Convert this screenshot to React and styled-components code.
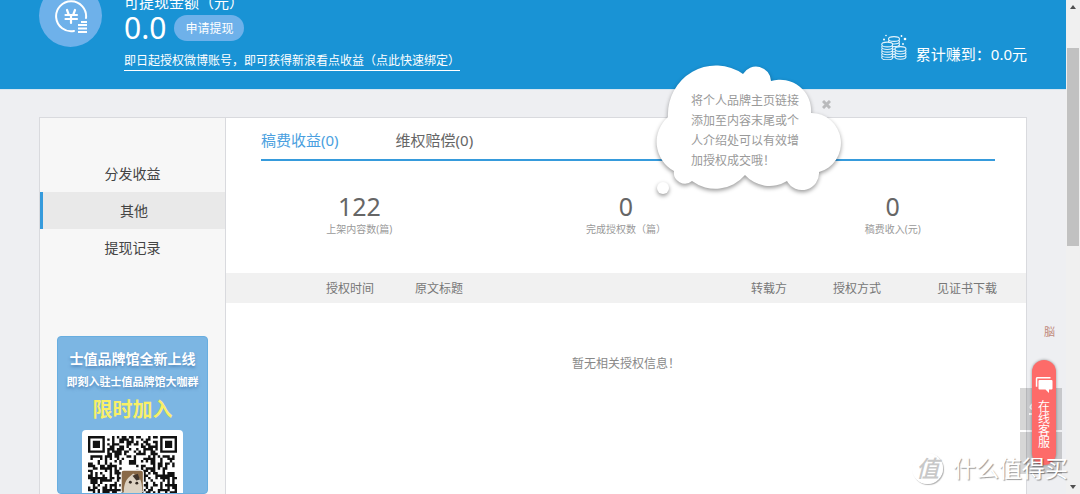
import React from "react";
import styled, { createGlobalStyle, css } from "styled-components";

const GlobalStyle = createGlobalStyle`
  * { box-sizing: border-box; }
  body {
    margin: 0;
    background: #eeeff2;
    color: #666;
    font-family: "Noto Sans", "Noto Sans CJK SC", sans-serif;
    font-size: 12px;
  }
  button { font: inherit; border: 0; padding: 0; background: none; cursor: pointer; }
  a { color: inherit; text-decoration: none; }
`;

const Screen = styled.div`
  position: relative;
  display: flex;
  height: 100vh;
  overflow: hidden;
`;

const Page = styled.div`
  flex: 1;
  min-width: 0;
  display: flex;
  flex-direction: column;
`;

/* Header */
const Header = styled.header`
  display: flex;
  align-items: flex-end;
  gap: 22px;
  height: 89px;
  flex: none;
  padding: 0 39px 18px;
  overflow: hidden;
  background: #1993d5;
  color: #fff;
`;

const CoinBadge = styled.div`
  display: grid;
  place-items: center;
  width: 63px;
  height: 63px;
  flex: none;
  margin-bottom: 24px;
  border-radius: 50%;
  background: #6eb1ea;
`;

const Balance = styled.div`
  flex: 1;
  display: flex;
  flex-direction: column;
  align-items: flex-start;
`;

const BalanceLabel = styled.span`
  font-size: 15px;
  line-height: 20px;
`;

const AmountRow = styled.div`
  display: flex;
  align-items: center;
  gap: 8px;
  margin-bottom: 8px;
`;

const Amount = styled.span`
  font-size: 30px;
  line-height: 32px;
`;

const WithdrawButton = styled.button`
  height: 26px;
  padding: 0 11px;
  border-radius: 13px;
  background: #6eb1ea;
  color: #fff;
`;

const BindLink = styled.a`
  line-height: 18px;
  border-bottom: 1px solid #fff;
`;

const Earned = styled.div`
  display: flex;
  align-items: flex-start;
  gap: 9px;
  margin-bottom: 5px;
  font-size: 15px;
`;

const EarnedText = styled.span`
  padding-top: 8px;
  line-height: 24px;
`;

/* Body */
const Body = styled.main`
  flex: 1;
  display: flex;
  min-height: 0;
  padding: 27px 39px 0;
  border-top: 1px solid #d5e6f1;
`;

const Panel = styled.div`
  flex: 1;
  display: flex;
  border: 1px solid #d9dade;
  border-bottom: 0;
  background: #fff;
`;

const Sidebar = styled.aside`
  display: flex;
  flex-direction: column;
  justify-content: space-between;
  width: 186px;
  flex: none;
  padding-top: 37px;
  border-right: 1px solid #d9dade;
  background: #f7f7f7;
`;

const NavItem = styled.a`
  display: block;
  line-height: 37px;
  font-size: 14px;
  color: #444;
  text-align: center;
  ${(p) =>
    p.$active &&
    css`
      border-left: 3px solid #369bdc;
      background: #e9e9e9;
    `}
`;

const Promo = styled.section`
  display: flex;
  flex-direction: column;
  align-items: center;
  margin: 0 17px;
  padding: 11px 0 0;
  border: 1px solid #68aee0;
  border-radius: 4px;
  background: #7cb6e3;
  color: #fff;
  white-space: nowrap;
`;

const PromoTitle = styled.strong`
  font-size: 14px;
  line-height: 22px;
  font-weight: 700;
  text-shadow: 0 2px 3px rgba(40, 90, 150, 0.5);
`;

const PromoText = styled.strong`
  font-size: 11px;
  line-height: 24px;
  font-weight: 700;
  text-shadow: 0 2px 3px rgba(40, 90, 150, 0.5);
`;

const PromoCall = styled.strong`
  font-size: 20px;
  line-height: 32px;
  font-weight: 700;
  color: #f8ef67;
`;

const QrCard = styled.div`
  width: 101px;
  height: 63px;
  margin-top: 4px;
  padding: 6px;
  overflow: hidden;
  border-radius: 4px 4px 0 0;
  background: #fff;
`;

const Content = styled.section`
  flex: 1;
  min-width: 0;
`;

const Tabs = styled.nav`
  display: flex;
  gap: 57px;
  margin: 0 31px 0 35px;
  height: 43px;
  border-bottom: 2px solid #369bdc;
`;

const Tab = styled.button`
  height: 42px;
  font-size: 15px;
  color: ${(p) => (p.$active ? "#4a9fe0" : "#666")};
`;

const Stats = styled.div`
  display: grid;
  grid-template-columns: repeat(3, 1fr);
  height: 112px;
  padding-top: 29px;
  text-align: center;
`;

const StatValue = styled.div`
  font-size: 25px;
  line-height: 32px;
  color: #666;
`;

const StatLabel = styled.div`
  font-size: 10px;
  line-height: 15px;
  color: #999;
`;

const Records = styled.table`
  width: 100%;
  table-layout: fixed;
  border-collapse: collapse;
`;

const HeadCell = styled.th`
  width: ${(p) => p.$width || "auto"};
  height: 30px;
  padding: 0 0 0 ${(p) => (p.$first ? "100px" : "0")};
  background: #f1f1f1;
  color: #777;
  font-weight: 400;
  text-align: left;
`;

const EmptyCell = styled.td`
  height: 120px;
  padding: 0;
  color: #888;
  text-align: center;
`;

/* Overlays */
const Cloud = styled.div`
  position: absolute;
  top: 62px;
  right: 236px;
  width: 192px;
  height: 136px;
`;

const CloudShape = styled.svg`
  position: absolute;
  inset: 0;
  filter: drop-shadow(0 2px 2px rgba(0, 0, 0, 0.4));
`;

const CloudText = styled.p`
  position: relative;
  width: 109px;
  margin: 29px 0 0 39px;
  line-height: 20px;
  color: #999;
`;

const CloseButton = styled.button`
  position: absolute;
  top: 36px;
  right: 12px;
  display: grid;
  place-items: center;
  width: 12px;
  height: 12px;
`;

const FloatTools = styled.div`
  position: absolute;
  right: 18px;
  bottom: 20px;
  display: grid;
  gap: 2px;
`;

const ToolBox = styled.button`
  display: grid;
  align-items: center;
  width: 42px;
  height: 42px;
  padding-left: 8px;
  background: rgba(0, 0, 0, 0.16);
`;

const Service = styled.button`
  position: absolute;
  right: 24px;
  bottom: 29px;
  display: flex;
  flex-direction: column;
  align-items: center;
  gap: 8px;
  width: 24px;
  height: 105px;
  padding: 17px 6px 0;
  border-radius: 12px;
  background: #fd6b69;
  box-shadow: 0 0 3px rgba(0, 0, 0, 0.4);
  color: #fff;
  line-height: 12px;
`;

const SideGlyph = styled.span`
  position: absolute;
  right: 25px;
  bottom: 154px;
  font-size: 11px;
  line-height: 16px;
  color: #c08a7c;
`;

const Watermark = styled.div`
  position: absolute;
  right: 12px;
  bottom: 8px;
  display: flex;
  align-items: center;
  gap: 10px;
  color: #fff;
  font-size: 23px;
  line-height: 36px;
  text-shadow: 1px 1px 1px rgba(0, 0, 0, 0.4);
  pointer-events: none;
`;

const WatermarkSeal = styled.span`
  width: 31px;
  height: 31px;
  border: 1px solid #fff;
  border-radius: 50%;
  box-shadow: 1px 1px 1px rgba(0, 0, 0, 0.3);
  color: #c8c8c8;
  line-height: 28px;
  text-align: center;
  text-shadow: none;
  font-style: italic;
  font-weight: 500;
`;

const ScrollTrack = styled.div`
  display: flex;
  flex-direction: column;
  align-items: center;
  justify-content: space-between;
  width: 14px;
  flex: none;
  padding: 5px 0;
  background: #f0f0f0;
`;

const ScrollThumb = styled.div`
  width: 12px;
  height: 41%;
  margin: 39px 0 auto;
  background: #c1c1c1;
`;

const N = 37;
function qrPath() {
  let seed = 20;
  let d = "";
  const finder = (x, y, ox, oy) => {
    const a = Math.max(Math.abs(x - ox - 3), Math.abs(y - oy - 3));
    return a === 3 || a <= 1;
  };
  for (let y = 0; y < N; y++) {
    for (let x = 0; x < N; x++) {
      seed = (seed * 1103515245 + 12345) % 2147483648;
      let on = seed / 2147483648 > 0.48;
      if (x < 8 && y < 8) on = x < 7 && y < 7 && finder(x, y, 0, 0);
      else if (x >= N - 8 && y < 8) on = x >= N - 7 && y < 7 && finder(x, y, N - 7, 0);
      if (on) d += `M${x} ${y}h1v1h-1z`;
    }
  }
  return d;
}
const QR_PATH = qrPath();

const QrCode = () => (
  <svg width="89" height="89" viewBox="0 0 37 37" role="img" aria-label="二维码">
    <path d={QR_PATH} fill="#111" />
    <rect x="13.6" y="14" width="9.6" height="9.6" rx="1" fill="#fff" />
    <rect x="14" y="14.4" width="8.8" height="9" rx=".8" fill="#8a6a48" />
    <path d="M15 24c-.4-3 .6-6 2.600-7.400l1.200-1 1 .8c2 .6 3 3 2.600 7.600z" fill="#ddd2c2" />
    <path d="M18.500 16.500l2.200-.8.900 2.400-1.500.4z" fill="#41352c" />
    <circle cx="17.600" cy="19.200" r=".6" fill="#342a22" />
    <circle cx="20.300" cy="19.600" r=".6" fill="#342a22" />
  </svg>
);

const YuanIcon = () => (
  <svg width="34" height="34" viewBox="0 0 34 34" fill="none" stroke="#fff" strokeWidth="2" strokeLinecap="round">
    <path d="M20 32A15 15 0 1 1 32 19" />
    <path d="M13 11l1.500 4M21 11l-1.500 4M11.500 16h11.500M11.500 20h11.500M17 16V24" strokeWidth="2.200" />
    <path d="M27 23h6M24 26h9M24 29.500h9M24 33h9" strokeLinecap="butt" />
  </svg>
);

/* Coins are drawn from the lowest to the top one so that each covers the rim below it. */
const Stack = ({ x, y, n }) => (
  <g>
    {Array.from({ length: n }, (_, i) => (
      <ellipse key={i} cx={x} cy={y + (n - 1 - i) * 2.6} rx="5.500" ry="2.400" />
    ))}
  </g>
);

const CoinsIcon = () => (
  <svg width="26" height="26" viewBox="0 0 26 26" fill="#1993d5" stroke="#e3f3fc" strokeWidth="1.100">
    <Stack x={13} y={5} n={7} />
    <Stack x={6.2} y={10.500} n={6} />
    <Stack x={19.500} y={15} n={4} />
    <g fill="#fff" stroke="none">
      <circle cx="3" cy="5.500" r="1" />
      <circle cx="5" cy="1.500" r=".8" />
      <circle cx="20.500" cy="2" r=".9" />
      <circle cx="24" cy="5" r="1.300" />
      <circle cx="22" cy="10" r=".9" />
    </g>
  </svg>
);

const ChatIcon = () => (
  <svg width="18" height="16" viewBox="0 0 18 16" fill="#fff">
    <path d="M2 0h13.500v1.600H2.300v8.200H.8V1.500Q.8 0 2 0z" />
    <path d="M4.500 3h12q1 0 1 1v7.500q0 1-1 1H14V16l-3.500-3.500h-6q-1 0-1-1V4q0-1 1-1z" />
  </svg>
);

const Arrow = ({ down }) => (
  <svg width="6" height="4" viewBox="0 0 6 4">
    <path d={down ? "M0 0h6L3 4z" : "M0 4h6L3 0z"} fill="#505050" />
  </svg>
);

const NAV = ["分发收益", "其他", "提现记录"];
const STATS = [
  ["122", "上架内容数(篇)"],
  ["0", "完成授权数（篇）"],
  ["0", "稿费收入(元)"],
];
const COLUMNS = [
  ["授权时间", "189px"],
  ["原文标题", null],
  ["转载方", "82px"],
  ["授权方式", "104px"],
  ["见证书下载", "89px"],
];

export default function App() {
  return (
    <>
      <GlobalStyle />
      <Screen>
        <Page>
          <Header>
            <CoinBadge>
              <YuanIcon />
            </CoinBadge>
            <Balance>
              <BalanceLabel>可提现金额（元）</BalanceLabel>
              <AmountRow>
                <Amount>0.0</Amount>
                <WithdrawButton type="button">申请提现</WithdrawButton>
              </AmountRow>
              <BindLink href="#bind">即日起授权微博账号，即可获得新浪看点收益（点此快速绑定）</BindLink>
            </Balance>
            <Earned>
              <CoinsIcon />
              <EarnedText>累计赚到：0.0元</EarnedText>
            </Earned>
          </Header>
          <Body>
            <Panel>
              <Sidebar>
                <nav>
                  {NAV.map((label) => (
                    <NavItem key={label} href="#nav" $active={label === "其他"}>
                      {label}
                    </NavItem>
                  ))}
                </nav>
                <Promo>
                  <PromoTitle>士值品牌馆全新上线</PromoTitle>
                  <PromoText>即刻入驻士值品牌馆大咖群</PromoText>
                  <PromoCall>限时加入</PromoCall>
                  <QrCard>
                    <QrCode />
                  </QrCard>
                </Promo>
              </Sidebar>
              <Content>
                <Tabs>
                  <Tab type="button" $active>稿费收益(0)</Tab>
                  <Tab type="button">维权赔偿(0)</Tab>
                </Tabs>
                <Stats>
                  {STATS.map(([value, label]) => (
                    <div key={label}>
                      <StatValue>{value}</StatValue>
                      <StatLabel>{label}</StatLabel>
                    </div>
                  ))}
                </Stats>
                <Records>
                  <thead>
                    <tr>
                      {COLUMNS.map(([label, width], i) => (
                        <HeadCell key={label} $width={width} $first={i === 0}>
                          {label}
                        </HeadCell>
                      ))}
                    </tr>
                  </thead>
                  <tbody>
                    <tr>
                      <EmptyCell colSpan={5}>暂无相关授权信息！</EmptyCell>
                    </tr>
                  </tbody>
                </Records>
              </Content>
            </Panel>
          </Body>
        </Page>
        <ScrollTrack>
          <Arrow />
          <ScrollThumb />
          <Arrow down />
        </ScrollTrack>

        <Cloud>
          <CloudShape width="192" height="136" viewBox="652 62 192 136" fill="#fff">
            <path d="M668 117A48 49 0 0 1 743 74A15 15 0 0 1 771 81A31 31 0 0 1 811 113A29.500 30 0 0 1 819 172A17 17 0 0 1 787 181A33 33 0 0 1 745 175A39 39 0 0 1 692 181A11 11 0 0 1 674 171A33 33 0 0 1 668 117z" />
            <circle cx="663" cy="188" r="6" />
          </CloudShape>
          <CloudText>将个人品牌主页链接添加至内容末尾或个人介绍处可以有效增加授权成交哦！</CloudText>
          <CloseButton type="button" aria-label="关闭">
            <svg width="9" height="9" viewBox="0 0 9 9" stroke="#b9babc" strokeWidth="3">
              <path d="M1 1l7 7M8 1l-7 7" />
            </svg>
          </CloseButton>
        </Cloud>

        <SideGlyph>脳</SideGlyph>
        <FloatTools>
          <ToolBox type="button" aria-label="分享">
            <svg width="14" height="18" viewBox="0 0 14 18" fill="none" stroke="#f5f5f5" strokeWidth="2">
              <path d="M6 3Q1 6 3 8.500Q5 10 8 9M1 14h12" />
            </svg>
          </ToolBox>
          <ToolBox type="button" aria-label="返回顶部" />
        </FloatTools>
        <Service type="button">
          <ChatIcon />
          <span>在线客服</span>
        </Service>
        <Watermark>
          <WatermarkSeal>值</WatermarkSeal>
          <span>什么值得买</span>
        </Watermark>
      </Screen>
    </>
  );
}
